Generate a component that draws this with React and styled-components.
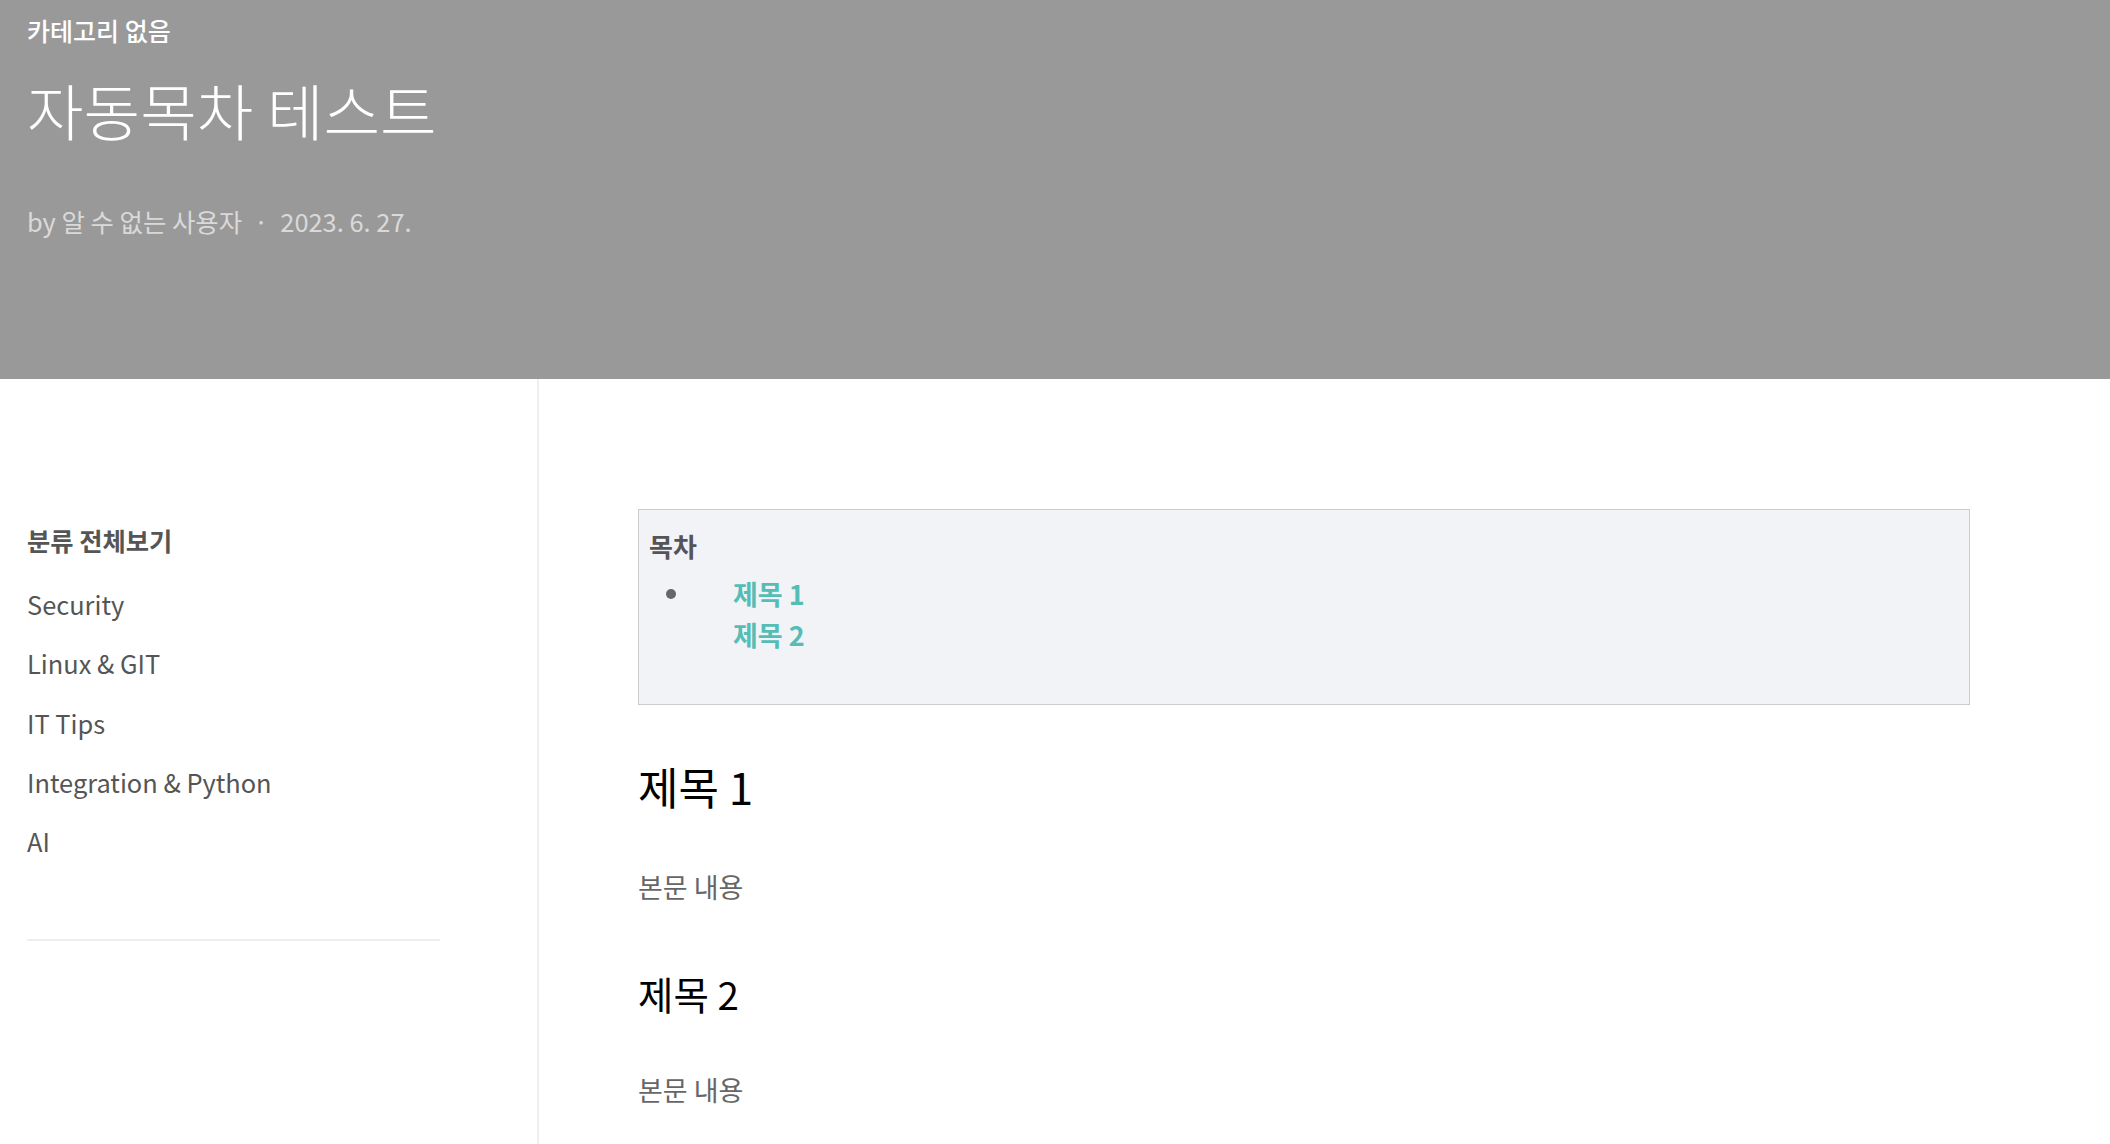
import React from "react";
import styled, { createGlobalStyle } from "styled-components";

const Global = createGlobalStyle`
  html, body { margin: 0; padding: 0; background: #fff; }
  body {
    font-family: "Noto Sans CJK KR", "Noto Sans", sans-serif;
    -webkit-font-smoothing: antialiased;
  }
  * { box-sizing: border-box; }
`;

const Page = styled.div`
  display: flex;
  flex-direction: column;
  min-height: 1144px;
`;

const Header = styled.header`
  height: 379px;
  background: #999999;
  padding: 13px 27px 0;
  display: flex;
  flex-direction: column;
`;

const Category = styled.div`
  font-size: 25px;
  line-height: 34px;
  font-weight: 500;
  color: #fff;
`;

const Title = styled.h1`
  margin: 21px 0 0;
  font-size: 61.5px;
  line-height: 83px;
  font-weight: 300;
  color: #fff;
`;

const Meta = styled.div`
  margin-top: 54px;
  font-size: 25.4px;
  line-height: 33px;
  color: #d9d9d9;
  display: flex;
  align-items: center;
`;

const Dot = styled.span`
  margin: 0 12px;
`;

const Body = styled.div`
  flex: 1;
  display: flex;
`;

const Sidebar = styled.aside`
  width: 539px;
  flex-shrink: 0;
  border-right: 2px solid #eeeeee;
  padding: 144px 0 0 27px;
`;

const SideHeading = styled.div`
  font-size: 25.3px;
  line-height: 34px;
  font-weight: 700;
  color: #555;
`;

const CatList = styled.ul`
  list-style: none;
  margin: 18px 0 0;
  padding: 0;
  display: flex;
  flex-direction: column;
`;

const CatItem = styled.li`
  font-size: 25.4px;
  line-height: 59.3px;
  color: #555;
`;

const Divider = styled.hr`
  width: 413px;
  margin: 68px 0 0;
  border: 0;
  border-top: 2px solid #eeeeee;
`;

const Content = styled.main`
  flex: 1;
  padding: 130px 140px 0 99px;
`;

const Toc = styled.div`
  background: #f2f3f7;
  border: 1px solid #cccccc;
  padding: 18px 10px 49px;
`;

const TocTitle = styled.div`
  font-size: 26px;
  line-height: 36px;
  font-weight: 700;
  color: #555;
`;

const TocList = styled.ul`
  list-style: none;
  margin: 9px 0 0;
  padding: 0 0 0 17px;
`;

const TocItem = styled.li`
  display: flex;
  align-items: flex-start;
  gap: 57px;
`;

const Bullet = styled.span`
  width: 10px;
  height: 10px;
  border-radius: 50%;
  background: #666;
  margin-top: 16px;
  flex-shrink: 0;
`;

const TocLinks = styled.div`
  display: flex;
  flex-direction: column;
`;

const TocLink = styled.a`
  font-size: 27px;
  line-height: 41px;
  font-weight: 700;
  color: #55bdb6;
  text-decoration: none;
`;

const Heading = styled.h2`
  margin: ${(p) => p.$mt}px 0 0;
  font-size: ${(p) => p.$size}px;
  line-height: 1.4;
  font-weight: 400;
  color: #000;
`;

const Para = styled.p`
  margin: ${(p) => p.$mt}px 0 0;
  font-size: 27px;
  line-height: 41px;
  color: #666;
`;

const categories = ["Security", "Linux & GIT", "IT Tips", "Integration & Python", "AI"];

export default function App() {
  return (
    <Page>
      <Global />
      <Header>
        <Category>카테고리 없음</Category>
        <Title>자동목차 테스트</Title>
        <Meta>
          <span>by 알 수 없는 사용자</span>
          <Dot>·</Dot>
          <span>2023. 6. 27.</span>
        </Meta>
      </Header>
      <Body>
        <Sidebar>
          <SideHeading>분류 전체보기</SideHeading>
          <CatList>
            {categories.map((c) => (
              <CatItem key={c}>{c}</CatItem>
            ))}
          </CatList>
          <Divider />
        </Sidebar>
        <Content>
          <Toc>
            <TocTitle>목차</TocTitle>
            <TocList>
              <TocItem>
                <Bullet />
                <TocLinks>
                  <TocLink href="#h1">제목 1</TocLink>
                  <TocLink href="#h2">제목 2</TocLink>
                </TocLinks>
              </TocItem>
            </TocList>
          </Toc>
          <Heading id="h1" $size={44} $mt={51}>제목 1</Heading>
          <Para $mt={48}>본문 내용</Para>
          <Heading as="h3" id="h2" $size={38.5} $mt={60}>제목 2</Heading>
          <Para $mt={49}>본문 내용</Para>
        </Content>
      </Body>
    </Page>
  );
}
